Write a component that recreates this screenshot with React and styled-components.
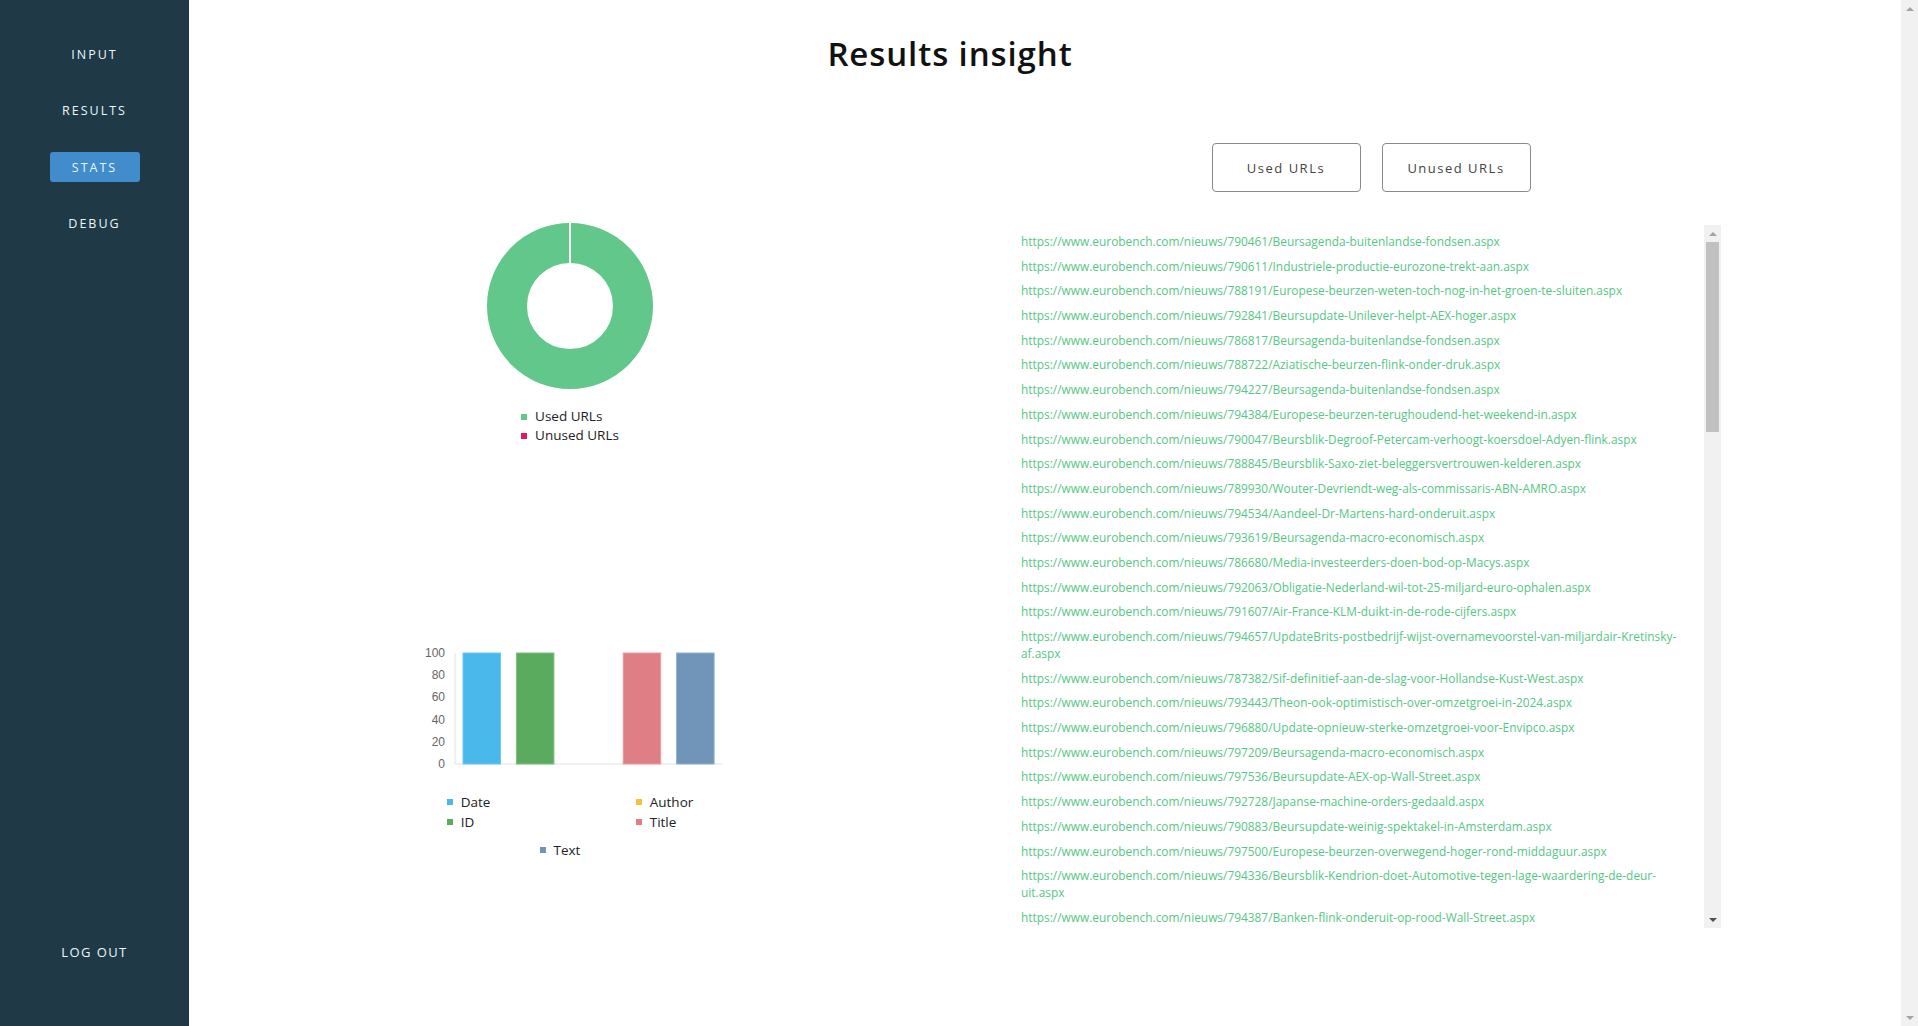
import React from 'react';
import styled, { createGlobalStyle } from 'styled-components';

const GlobalStyle = createGlobalStyle`
	body {
		margin: 0;
		font-family: 'Open Sans', 'Noto Sans', sans-serif;
		background: #fff;
		color: #222;
		overflow: hidden;
	}
	* {
		box-sizing: border-box;
	}
`;

const Layout = styled.div`
	display: flex;
	height: 100vh;
`;

const Sidebar = styled.nav`
	width: 189px;
	flex-shrink: 0;
	background: #1f3a46;
	display: flex;
	flex-direction: column;
	align-items: center;
	padding: 39px 0 59px;
`;

const NavList = styled.div`
	display: flex;
	flex-direction: column;
	align-items: center;
	gap: 26.5px;
`;

const NavItem = styled.a`
	width: 90px;
	height: 30px;
	display: flex;
	align-items: center;
	justify-content: center;
	border-radius: 3px;
	font-size: 12.5px;
	font-weight: 500;
	letter-spacing: 2px;
	text-transform: uppercase;
	color: #eaf6fb;
	text-decoration: none;
	cursor: pointer;
	background: ${(p) => (p.$active ? '#418ccb' : 'transparent')};
`;

const LogOut = styled(NavItem)`
	margin-top: auto;
	width: 120px;
	font-size: 13px;
	letter-spacing: 1.4px;
`;

const Main = styled.main`
	flex: 1;
	overflow: hidden;
`;

/* drawn scrollbar: the screenshot browser shows classic bars */
const Track = styled.div`
	width: 17px;
	flex-shrink: 0;
	background: #f1f1f1;
	display: flex;
	flex-direction: column;
`;

const ArrowButton = styled.div`
	height: 17px;
	flex-shrink: 0;
	display: flex;
	align-items: center;
	justify-content: center;
	&::after {
		content: '';
		width: 0;
		height: 0;
		border-left: 4px solid transparent;
		border-right: 4px solid transparent;
		${(p) => (p.$down ? 'border-top' : 'border-bottom')}: 4px solid ${(p) => p.$color || '#a3a3a3'};
	}
`;

const Thumb = styled.div`
	height: ${(p) => p.$size}px;
	margin: 0 2px;
	background: #c1c1c1;
`;

const Spacer = styled.div`
	flex: 1;
`;

const Content = styled.div`
	width: 1532px;
`;

const Title = styled.h1`
	margin: 37px 10px 0 0;
	font-size: 33px;
	line-height: 33px;
	font-weight: 600;
	letter-spacing: 0.9px;
	text-align: center;
	color: #111;
`;

const Columns = styled.div`
	display: grid;
	grid-template-columns: 762px 700px;
	column-gap: 70px;
	margin-top: 73px;
`;

const ChartColumn = styled.section`
	display: flex;
	flex-direction: column;
	align-items: center;
	padding-top: 78px;
`;

const Legend = styled.ul`
	list-style: none;
	margin: 16px 0 0;
	padding: 0;
	font-size: 13.5px;
	line-height: 19px;
	color: #222;
`;

const LegendItem = styled.li`
	display: flex;
	align-items: center;
	gap: 8px;
	&::before {
		content: '';
		width: 6px;
		height: 6px;
		background: ${(p) => p.$color};
	}
`;

const BarWrap = styled.div`
	margin-top: 200px;
	display: flex;
	flex-direction: column;
	align-items: center;
`;

const BarLegend = styled.div`
	margin-top: 19px;
	display: grid;
	grid-template-columns: 189px auto;
	font-size: 13.5px;
	line-height: 20px;
	color: #222;
`;

const BarLegendLast = styled.div`
	grid-column: 1 / span 2;
	justify-self: center;
	margin: 8px 20px 0 0;
`;

const ListColumn = styled.section`
	display: flex;
	flex-direction: column;
	align-items: center;
`;

const ButtonRow = styled.div`
	display: flex;
	gap: 21px;
`;

const ToggleButton = styled.button`
	width: 149px;
	height: 49px;
	background: #fff;
	border: 1px solid #8a8a8a;
	border-radius: 4px;
	font-family: inherit;
	font-size: 13px;
	letter-spacing: 1.5px;
	color: #444;
	cursor: pointer;
`;

const UrlBox = styled.div`
	margin-top: 33px;
	width: 700px;
	height: 703px;
	display: flex;
`;

const UrlList = styled.div`
	flex: 1;
	overflow: hidden;
	padding: 8px 16px 8px 0;
	display: flex;
	flex-direction: column;
	gap: 7.7px;
`;

const UrlLink = styled.a`
	display: block;
	font-size: 11.9px;
	line-height: 17px;
	color: #56c785;
	text-decoration: none;
	flex-shrink: 0;
`;

const base = 'https://www.eurobench.com/nieuws/';

const urls = [
	'790461/Beursagenda-buitenlandse-fondsen',
	'790611/Industriele-productie-eurozone-trekt-aan',
	'788191/Europese-beurzen-weten-toch-nog-in-het-groen-te-sluiten',
	'792841/Beursupdate-Unilever-helpt-AEX-hoger',
	'786817/Beursagenda-buitenlandse-fondsen',
	'788722/Aziatische-beurzen-flink-onder-druk',
	'794227/Beursagenda-buitenlandse-fondsen',
	'794384/Europese-beurzen-terughoudend-het-weekend-in',
	'790047/Beursblik-Degroof-Petercam-verhoogt-koersdoel-Adyen-flink',
	'788845/Beursblik-Saxo-ziet-beleggersvertrouwen-kelderen',
	'789930/Wouter-Devriendt-weg-als-commissaris-ABN-AMRO',
	'794534/Aandeel-Dr-Martens-hard-onderuit',
	'793619/Beursagenda-macro-economisch',
	'786680/Media-investeerders-doen-bod-op-Macys',
	'792063/Obligatie-Nederland-wil-tot-25-miljard-euro-ophalen',
	'791607/Air-France-KLM-duikt-in-de-rode-cijfers',
	'794657/UpdateBrits-postbedrijf-wijst-overnamevoorstel-van-miljardair-Kretinsky-af',
	'787382/Sif-definitief-aan-de-slag-voor-Hollandse-Kust-West',
	'793443/Theon-ook-optimistisch-over-omzetgroei-in-2024',
	'796880/Update-opnieuw-sterke-omzetgroei-voor-Envipco',
	'797209/Beursagenda-macro-economisch',
	'797536/Beursupdate-AEX-op-Wall-Street',
	'792728/Japanse-machine-orders-gedaald',
	'790883/Beursupdate-weinig-spektakel-in-Amsterdam',
	'797500/Europese-beurzen-overwegend-hoger-rond-middaguur',
	'794336/Beursblik-Kendrion-doet-Automotive-tegen-lage-waardering-de-deur-uit',
	'794387/Banken-flink-onderuit-op-rood-Wall-Street',
];

const BarChart = () => {
	const ticks = [100, 80, 60, 40, 20, 0];
	const bars = [
		{ v: 100, fill: '#49b9ec', stroke: '#6cc8f2' },
		{ v: 100, fill: '#5aab5e', stroke: '#7cbf7f' },
		{ v: 0, fill: '#f4c140', stroke: '#f4c140' },
		{ v: 100, fill: '#df7e84', stroke: '#e89ca0' },
		{ v: 100, fill: '#7095b8', stroke: '#92b0cc' },
	];
	const top = 8;
	const bottom = 119;
	const h = bottom - top;
	return (
		<svg width='310' height='128' viewBox='0 0 310 128'>
			{ticks.map((t, i) => (
				<text key={t} x='30' y={top + (h / 5) * i + 4} textAnchor='end' fontSize='12' fill='#666' fontFamily='Liberation Sans, Arial, sans-serif'>
					{t}
				</text>
			))}
			<line x1='40' y1={top} x2='40' y2={bottom} stroke='#e2e2e2' />
			<line x1='40' y1={bottom} x2='307' y2={bottom} stroke='#e2e2e2' />
			{bars.map((b, i) =>
				b.v ? (
					<rect key={i} x={40 + i * 53.4 + 8} y={bottom - (h * b.v) / 100} width='37.5' height={(h * b.v) / 100} fill={b.fill} stroke={b.stroke} strokeWidth='1' />
				) : null
			)}
		</svg>
	);
};

const Donut = () => (
	<svg width='170' height='170' viewBox='0 0 170 170'>
		<circle cx='85' cy='85' r='63' fill='none' stroke='#61c78b' strokeWidth='40' />
		<line x1='85' y1='1' x2='85' y2='43' stroke='#fff' strokeWidth='2' />
	</svg>
);

const App = () => {
	return (
		<>
			<GlobalStyle />
			<Layout>
				<Sidebar>
					<NavList>
						<NavItem>Input</NavItem>
						<NavItem>Results</NavItem>
						<NavItem $active>Stats</NavItem>
						<NavItem>Debug</NavItem>
					</NavList>
					<LogOut>Log out</LogOut>
				</Sidebar>
				<Main>
					<Content>
						<Title>Results insight</Title>
						<Columns>
							<ChartColumn>
								<Donut />
								<Legend>
									<LegendItem $color='#61c78b'>Used URLs</LegendItem>
									<LegendItem $color='#e8175d'>Unused URLs</LegendItem>
								</Legend>
								<BarWrap>
									<BarChart />
									<BarLegend>
										<LegendItem $color='#49b9ec'>Date</LegendItem>
										<LegendItem $color='#f4c140'>Author</LegendItem>
										<LegendItem $color='#5aab5e'>ID</LegendItem>
										<LegendItem $color='#df7e84'>Title</LegendItem>
										<BarLegendLast>
											<LegendItem $color='#7095b8'>Text</LegendItem>
										</BarLegendLast>
									</BarLegend>
								</BarWrap>
							</ChartColumn>
							<ListColumn>
								<ButtonRow>
									<ToggleButton>Used URLs</ToggleButton>
									<ToggleButton>Unused URLs</ToggleButton>
								</ButtonRow>
								<UrlBox>
									<UrlList>
										{urls.map((u, i) => (
											<UrlLink key={i} href={base + u + '.aspx'}>
												{base + u + '.aspx'}
											</UrlLink>
										))}
									</UrlList>
									<Track>
										<ArrowButton />
										<Thumb $size={190} />
										<Spacer />
										<ArrowButton $down $color='#505050' />
									</Track>
								</UrlBox>
							</ListColumn>
						</Columns>
					</Content>
				</Main>
				<Track>
					<ArrowButton />
					<Spacer />
					<ArrowButton $down />
				</Track>
			</Layout>
		</>
	);
};

export default App;
